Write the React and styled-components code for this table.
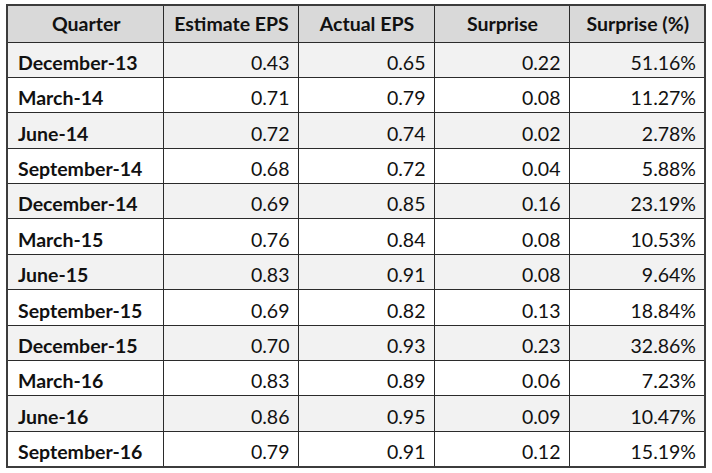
import React from 'react';
import styled, { createGlobalStyle } from 'styled-components';

const GlobalStyle = createGlobalStyle`
  html, body {
    margin: 0;
    padding: 0;
    background: #ffffff;
  }
  body {
    font-family: Lato, "Liberation Sans", sans-serif;
    color: #111111;
  }
`;

const Page = styled.div`
  padding: 4px 8px 0 6px;
`;

const Table = styled.table`
  width: 698px;
  border-collapse: collapse;
  table-layout: fixed;
  border: 2px solid #3c3c3c;
  font-size: 19.5px;
  th,
  td {
    border: 1px solid #2b2b2b;
    padding: 0 8px 2px 10px;
    vertical-align: bottom;
    line-height: 24px;
    white-space: nowrap;
  }
`;

const HeadRow = styled.tr`
  height: 37px;
  background: #d9d9d9;
  th {
    font-weight: 700;
    text-align: center;
    padding-bottom: 6px;
  }
`;

const Row = styled.tr`
  height: 35.4px;
  background: ${({ $shaded }) => ($shaded ? '#f2f2f2' : '#ffffff')};
`;

const QuarterCell = styled.td`
  font-weight: 700;
  text-align: left;
`;

const NumCell = styled.td`
  text-align: right;
`;

const columns = [
  { label: 'Quarter', width: 156 },
  { label: 'Estimate EPS', width: 135 },
  { label: 'Actual EPS', width: 136 },
  { label: 'Surprise', width: 135 },
  { label: 'Surprise (%)', width: 136 }
];

const rows = [
  ['December-13', '0.43', '0.65', '0.22', '51.16%'],
  ['March-14', '0.71', '0.79', '0.08', '11.27%'],
  ['June-14', '0.72', '0.74', '0.02', '2.78%'],
  ['September-14', '0.68', '0.72', '0.04', '5.88%'],
  ['December-14', '0.69', '0.85', '0.16', '23.19%'],
  ['March-15', '0.76', '0.84', '0.08', '10.53%'],
  ['June-15', '0.83', '0.91', '0.08', '9.64%'],
  ['September-15', '0.69', '0.82', '0.13', '18.84%'],
  ['December-15', '0.70', '0.93', '0.23', '32.86%'],
  ['March-16', '0.83', '0.89', '0.06', '7.23%'],
  ['June-16', '0.86', '0.95', '0.09', '10.47%'],
  ['September-16', '0.79', '0.91', '0.12', '15.19%']
];

export default function App() {
  return (
    <Page>
      <GlobalStyle />
      <Table>
        <colgroup>
          {columns.map((c) => (
            <col key={c.label} style={{ width: c.width }} />
          ))}
        </colgroup>
        <thead>
          <HeadRow>
            {columns.map((c) => (
              <th key={c.label}>{c.label}</th>
            ))}
          </HeadRow>
        </thead>
        <tbody>
          {rows.map(([quarter, ...nums], i) => (
            <Row key={quarter} $shaded={i % 2 === 0}>
              <QuarterCell>{quarter}</QuarterCell>
              {nums.map((n, j) => (
                <NumCell key={j}>{n}</NumCell>
              ))}
            </Row>
          ))}
        </tbody>
      </Table>
    </Page>
  );
}
